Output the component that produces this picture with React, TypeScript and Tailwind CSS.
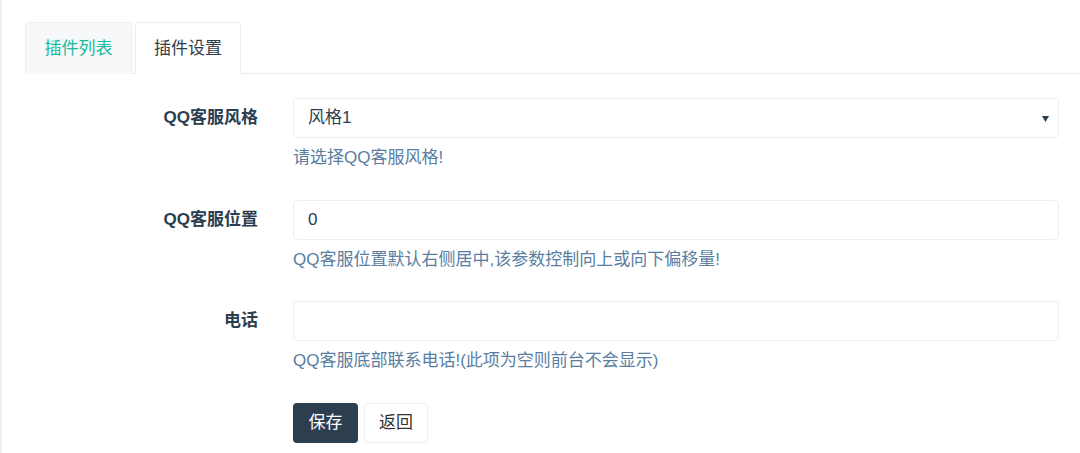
const fields = [
  { label: "QQ客服风格", value: "风格1", select: true, help: "请选择QQ客服风格!" },
  { label: "QQ客服位置", value: "0", select: false, help: "QQ客服位置默认右侧居中,该参数控制向上或向下偏移量!" },
  { label: "电话", value: "", select: false, help: "QQ客服底部联系电话!(此项为空则前台不会显示)" },
];

const App = () => {
  return (
    <div
      className="h-[453px] w-[1080px] overflow-hidden border-l-2 border-[#eef0f1] bg-white text-[17px] text-[#2c3e50]"
      style={{ fontFamily: '"Liberation Sans", "Noto Sans CJK SC", sans-serif' }}
    >
      <div className="ml-[23px] mt-[22px] flex h-[52px] gap-[3px] border-b border-[#e9ecee]">
        <div className="flex h-[52px] w-[107px] items-center justify-center rounded-t-[4px] border border-b-0 border-[#eef1f2] bg-[#f6f8f9] text-[#18bc9c]">
          插件列表
        </div>
        <div className="-mb-px flex h-[52px] w-[106px] items-center justify-center rounded-t-[4px] border border-b-0 border-[#e9ecee] bg-white text-[#333d47]">
          插件设置
        </div>
      </div>

      <form className="mt-[24px] flex flex-col gap-[28.5px] pr-[21px]">
        {fields.map((f) => (
          <div key={f.label} className="flex">
            <label className="flex h-[40px] w-[291px] shrink-0 items-center justify-end pr-[35px] font-bold text-[#2c3e50]">
              {f.label}
            </label>
            <div className="flex flex-1 flex-col">
              <div className="relative flex h-[40px] items-center rounded-[4px] border border-[#eceeef] bg-white px-[14px] text-[#2c3e50]">
                {f.value}
                {f.select && (
                  <svg className="absolute right-[9px] top-[17px]" width="7" height="6" viewBox="0 0 7 6">
                    <path d="M0 0h7L3.5 6z" fill="#2c3e50" />
                  </svg>
                )}
              </div>
              <div className="mt-[7px] leading-[26px] text-[#597ea2]">{f.help}</div>
            </div>
          </div>
        ))}
        <div className="flex gap-[6px] pl-[291px]">
          <button type="button" className="h-[40px] w-[65px] rounded-[4px] bg-[#2c3e50] text-white">
            保存
          </button>
          <button type="button" className="h-[40px] w-[64px] rounded-[4px] border border-[#eceeef] bg-white text-[#333]">
            返回
          </button>
        </div>
      </form>
    </div>
  );
};

export default App;
